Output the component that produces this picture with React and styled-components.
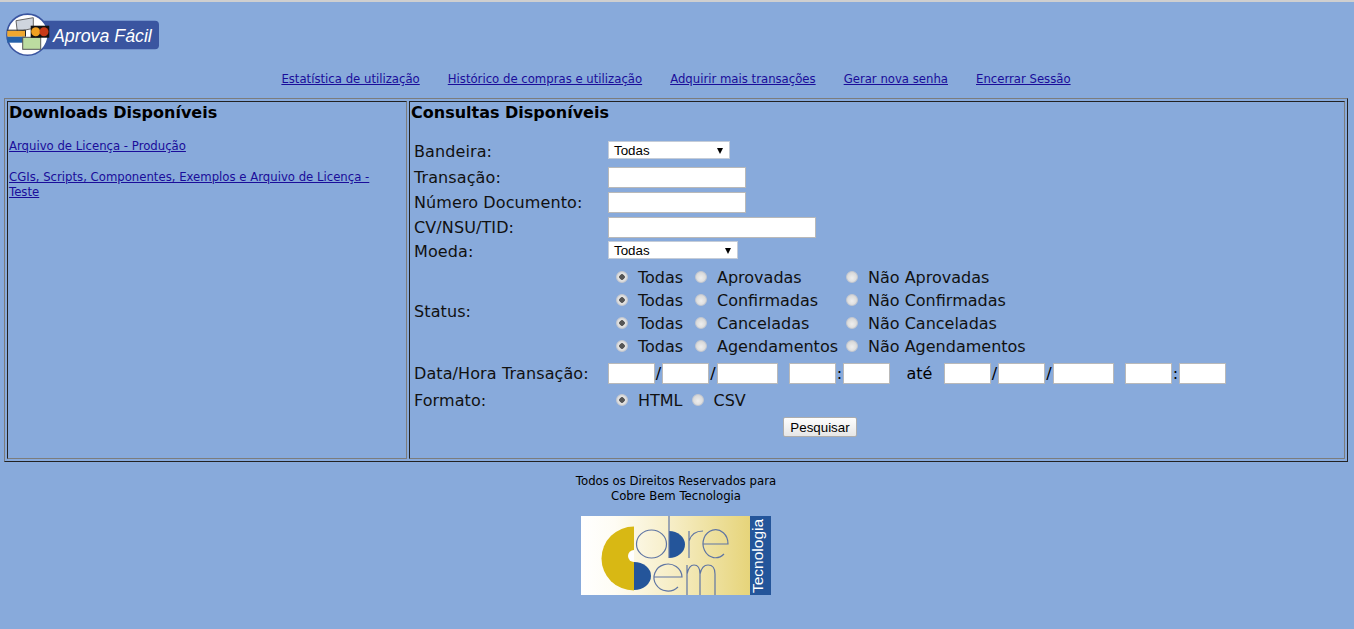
import React from 'react'
import styled, { createGlobalStyle } from 'styled-components'

const Global = createGlobalStyle`
  html, body { margin: 0; padding: 0; background: #88aadb; }
  body { font-family: "DejaVu Sans", Verdana, sans-serif; color: #000; height: 629px; overflow: hidden; }
`

const Page = styled.div`
  border-top: 2px solid #cfcfcf;
  padding: 0 6px 0 4px;
`

const Header = styled.div`
  height: 67px;
  padding: 10px 0 0 2px;
  box-sizing: border-box;
`

const Nav = styled.nav`
  display: flex;
  justify-content: center;
  gap: 28px;
  height: 29px;
  box-sizing: border-box;
  padding-top: 1px;
  font-size: 11.7px;
  line-height: 18px;
  a { color: #1a0d9a; }
`

const Frame = styled.table`
  width: 100%;
  height: 364px;
  border: 1px solid;
  border-color: #7c7c7c #222 #222 #7c7c7c;
  border-collapse: separate;
  border-spacing: 2px;
`

const Cell = styled.td`
  border: 1px solid;
  border-color: #222 #7c7c7c #7c7c7c #222;
  vertical-align: top;
  padding: 1px;
  width: ${p => p.$width || 'auto'};
`

const Title = styled.h3`
  font-size: 16px;
  line-height: 20px;
  margin: 0;
  font-weight: bold;
`

const Downloads = styled.div`
  margin-top: 16px;
  max-width: 380px;
  font-size: 11.7px;
  line-height: 15px;
  a { color: #1a0d9a; display: block; margin-bottom: 16px; }
`

const Form = styled.div`
  margin: 17px 0 0 3px;
  font-size: 16px;
`

const Row = styled.div`
  display: grid;
  grid-template-columns: 194px 1fr;
  grid-template-rows: 100%;
  align-items: center;
  height: ${p => p.$h || 25}px;
  margin-bottom: ${p => p.$mb || 0}px;
`

const Label = styled.div`
  line-height: 20px;
  color: #111;
  letter-spacing: 0.1px;
  padding-top: ${p => (p.$low ? 4 : 0)}px;
`

const Field = styled.div`
  display: flex;
  align-items: center;
`

const Select = styled.div`
  width: ${p => p.$w}px;
  height: 18px;
  background: #fff;
  border: 1px solid #c4ccd8;
  box-sizing: border-box;
  font: 13.33px/14px "Liberation Sans", Arial, sans-serif;
  padding: 2px 0 0 5px;
  display: flex;
  justify-content: space-between;
  align-items: center;
  &::after {
    content: '';
    margin-right: 6px;
    border-left: 3px solid transparent;
    border-right: 3px solid transparent;
    border-top: 6px solid #000;
  }
`

const Input = styled.input`
  width: ${p => p.$w}px;
  height: 21px;
  box-sizing: border-box;
  border: 1px solid #b9b9b9;
  background: #fff;
  padding: 0;
  margin: 0;
  flex: none;
`

const StatusGrid = styled.div`
  display: grid;
  grid-template-columns: 87px 151px 1fr;
  grid-auto-rows: 23px;
  align-items: center;
`

const Option = styled.label`
  display: flex;
  align-items: center;
  gap: 10px;
  line-height: 20px;
  color: #111;
  margin-left: ${p => p.$left || 0}px;
`

const Dot = styled.span`
  width: 12px;
  height: 12px;
  margin-left: ${p => p.$inset || 0}px;
  margin-top: -2px;
  border-radius: 50%;
  box-sizing: border-box;
  flex: none;
  background: ${p => p.$on
    ? 'radial-gradient(circle, #555 0 2.5px, #e4e4e4 3px, #cfcfcf 100%)'
    : 'radial-gradient(circle at 50% 60%, #eee 0, #cfcfcf 100%)'};
  border: 1px solid #c4c8d0;
`

const Sep = styled.span`
  width: ${p => p.$w || 7}px;
  text-align: center;
  flex: none;
  line-height: 20px;
  box-sizing: border-box;
  padding-left: ${p => p.$pad || 0}px;
`

const Button = styled.button`
  width: 74px;
  height: 20px;
  padding: 0;
  margin-left: 175px;
  background: linear-gradient(#fdfdfd, #e6e6e6);
  border: 1px solid #adadad;
  border-radius: 2px;
  font: 13.33px "Liberation Sans", Arial, sans-serif;
  color: #000;
`

const Footer = styled.footer`
  display: flex;
  flex-direction: column;
  align-items: center;
  font-size: 11.7px;
  line-height: 15px;
  margin-top: 12px;
  text-align: center;
`

const FooterLogo = styled.div`
  margin-top: 12px;
`

const ApLogo = () => (
  <svg width="156" height="46" viewBox="0 0 156 46" style={{ display: 'block' }}>
    <path d="M24 8.7H149a4 4 0 0 1 4 4V33.3a4 4 0 0 1-4 4H24z" fill="#3a55a0" />
    <circle cx="21.5" cy="22.7" r="20.6" fill="#fff" stroke="#3a55a0" strokeWidth="1.6" />
    <path d="M10 8.7L27.3 5.7V16.3L11.3 19.7z" fill="#cfd5de" stroke="#666" strokeWidth="1" />
    <rect x="1.3" y="18.7" width="17.7" height="6" fill="#f0a830" />
    <rect x="1.3" y="24.7" width="17.7" height="6" fill="#2560a8" />
    <path d="M1.3 18.2H19.5V24.7" fill="none" stroke="#222" strokeWidth="1" />
    <rect x="16.7" y="25.3" width="18" height="12" fill="#bcdca0" stroke="#555" strokeWidth="1" />
    <rect x="24.7" y="13.7" width="18.6" height="12" fill="#111" />
    <circle cx="29.7" cy="19.7" r="4.5" fill="#f0a020" />
    <circle cx="38" cy="19.7" r="4.5" fill="#c83a18" />
    <text x="47" y="29.7" fontFamily="Liberation Sans, Arial, sans-serif" fontStyle="italic" fontSize="17.8" fill="#fff">Aprova Fácil</text>
  </svg>
)

const CbLogo = () => (
  <svg width="190" height="79" viewBox="0 0 190 79" style={{ display: 'block' }}>
    <defs>
      <linearGradient id="cbg" x1="0" x2="1" y1="0" y2="0">
        <stop offset="0" stopColor="#ffffff" />
        <stop offset="0.2" stopColor="#fefcf4" />
        <stop offset="0.55" stopColor="#f6edc4" />
        <stop offset="1" stopColor="#e6d47a" />
      </linearGradient>
    </defs>
    <rect width="169" height="79" fill="url(#cbg)" />
    <rect x="169" width="21" height="79" fill="#24559a" />
    <path d="M53 10.500A32.500 32 0 0 0 53 74.500z" fill="#d8b814" />
    <path d="M53 34A6 6 0 0 0 53 46z" fill="#fff" />
    <path d="M53 46A17 14 0 0 1 53 74z" fill="#24559a" />
    <path d="M88 15A16 13.500 0 0 1 88 42z" fill="#24559a" />
    <g fill="none" stroke="#5f75a3" strokeWidth="1.2">
      <ellipse cx="70.5" cy="28" rx="15" ry="14" />
      <path d="M88 0V42" />
      <path d="M108 42V15M108 25q3-10 14-10" />
      <path d="M122.500 28H147A12.500 14 0 1 0 143 38" />
      <path d="M73 61H101A14 13.500 0 1 0 97 71" />
      <path d="M106 79V49M106 58q2-9 7-9q6 0 6 9V79M119 58q2-9 8-9q7 0 7 9V79" />
    </g>
    <text transform="translate(182 77) rotate(-90)" fontFamily="Liberation Sans, Arial, sans-serif" fontSize="15.500" fill="#fff">Tecnologia</text>
  </svg>
)

const statusRows = [
  ['Aprovadas', 'Não Aprovadas'],
  ['Confirmadas', 'Não Confirmadas'],
  ['Canceladas', 'Não Canceladas'],
  ['Agendamentos', 'Não Agendamentos'],
]

const DateInputs = () => (
  <>
    <Input $w={47} /><Sep>/</Sep>
    <Input $w={47} /><Sep $w={8}>/</Sep>
    <Input $w={61} /><Sep $w={11} />
    <Input $w={47} /><Sep>:</Sep>
    <Input $w={47} />
  </>
)

export default function App() {
  return (
    <Page>
      <Global />
      <Header><ApLogo /></Header>
      <Nav>
        <a href="#">Estatística de utilização</a>
        <a href="#">Histórico de compras e utilização</a>
        <a href="#">Adquirir mais transações</a>
        <a href="#">Gerar nova senha</a>
        <a href="#">Encerrar Sessão</a>
      </Nav>
      <Frame>
        <tbody>
          <tr>
            <Cell $width="396px">
              <Title>Downloads Disponíveis</Title>
              <Downloads>
                <a href="#">Arquivo de Licença - Produção</a>
                <a href="#">CGIs, Scripts, Componentes, Exemplos e Arquivo de Licença - Teste</a>
              </Downloads>
            </Cell>
            <Cell>
              <Title>Consultas Disponíveis</Title>
              <Form>
                <Row $h={20} $mb={5}>
                  <Label $low>Bandeira:</Label>
                  <Field><Select $w={122}>Todas</Select></Field>
                </Row>
                <Row>
                  <Label>Transação:</Label>
                  <Field><Input $w={138} /></Field>
                </Row>
                <Row>
                  <Label>Número Documento:</Label>
                  <Field><Input $w={138} /></Field>
                </Row>
                <Row>
                  <Label>CV/NSU/TID:</Label>
                  <Field><Input $w={208} /></Field>
                </Row>
                <Row $h={20} $mb={6}>
                  <Label $low>Moeda:</Label>
                  <Field><Select $w={130}>Todas</Select></Field>
                </Row>
                <Row $h={92} $mb={5}>
                  <Label>Status:</Label>
                  <StatusGrid>
                    {statusRows.map(([yes, no]) => (
                      <React.Fragment key={yes}>
                        <Option><Dot $on $inset={8} />Todas</Option>
                        <Option><Dot />{yes}</Option>
                        <Option><Dot />{no}</Option>
                      </React.Fragment>
                    ))}
                  </StatusGrid>
                </Row>
                <Row $h={21}>
                  <Label>Data/Hora Transação:</Label>
                  <Field>
                    <DateInputs />
                    <Sep $w={54} $pad={5}>até</Sep>
                    <DateInputs />
                  </Field>
                </Row>
                <Row $h={33}>
                  <Label>Formato:</Label>
                  <Field>
                    <Option><Dot $on $inset={8} />HTML</Option>
                    <Option $left={9}><Dot />CSV</Option>
                  </Field>
                </Row>
                <Row $h={20}>
                  <span />
                  <Field><Button>Pesquisar</Button></Field>
                </Row>
              </Form>
            </Cell>
          </tr>
        </tbody>
      </Frame>
      <Footer>
        <div>Todos os Direitos Reservados para<br />Cobre Bem Tecnologia</div>
        <FooterLogo><CbLogo /></FooterLogo>
      </Footer>
    </Page>
  )
}
